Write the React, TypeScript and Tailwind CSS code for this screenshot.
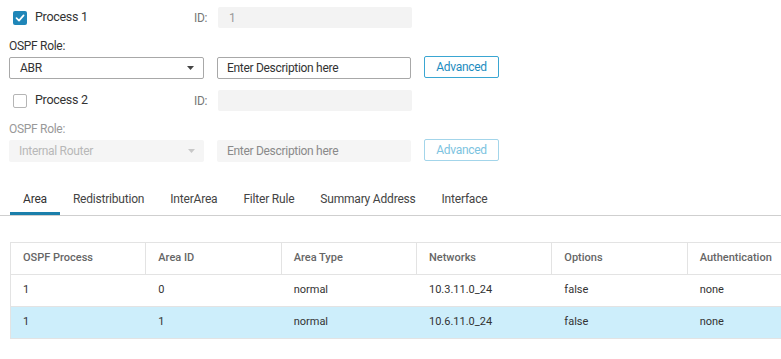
import React from "react";

const Check = ({ checked }: { checked: boolean }) =>
  checked ? (
    <span className="w-[14px] h-[14px] rounded-[2px] bg-[#1f86b8] flex items-center justify-center">
      <svg width="10" height="10" viewBox="0 0 10 10">
        <path d="M1.5 5.2 L4 7.6 L8.6 2.4" stroke="white" strokeWidth="1.7" fill="none" strokeLinecap="round" strokeLinejoin="round" />
      </svg>
    </span>
  ) : (
    <span className="w-[14px] h-[14px] rounded-[2px] border border-[#b5b5b5] bg-white" />
  );

const Caret = ({ light }: { light?: boolean }) => (
  <svg width="7" height="4" viewBox="0 0 7 4">
    <path d="M0 0 H7 L3.5 4 Z" fill={light ? "#c8c8c8" : "#444"} />
  </svg>
);

const ProcessBlock = ({ n, checked, id, role }: { n: number; checked: boolean; id: string; role: string }) => (
  <div>
    <div className="h-[35px] flex items-center">
      <div className="w-[194px] pl-[13px] flex items-center gap-[8px]">
        <Check checked={checked} />
        <span className="text-[#333] text-[12.5px]">Process {n}</span>
      </div>
      <span className="w-[24px] text-[#777]">ID:</span>
      <div className="w-[194px] h-[21px] bg-[#f3f3f3] rounded-[2px] flex items-center px-[11px] text-[#999]">{id}</div>
    </div>
    <div className={`h-[22px] pl-[9px] flex items-center ${checked ? "text-[#333]" : "text-[#999]"}`}>OSPF Role:</div>
    <div className="h-[22px] pl-[9px] flex items-center gap-[13px]">
      {checked ? (
        <div className="w-[195px] h-[22px] border border-[#a8a8a8] rounded-[2px] flex items-center justify-between pl-[10px] pr-[9px] text-[#333]">
          <span>{role}</span>
          <Caret />
        </div>
      ) : (
        <div className="w-[195px] h-[22px] bg-[#f5f5f5] rounded-[2px] flex items-center justify-between pl-[10px] pr-[9px] text-[#b8b8b8]">
          <span>{role}</span>
          <Caret light />
        </div>
      )}
      {checked ? (
        <div className="w-[194px] h-[22px] border border-[#a8a8a8] rounded-[2px] flex items-center px-[9px] text-[#333]">
          Enter Description here
        </div>
      ) : (
        <div className="w-[194px] h-[22px] bg-[#f5f5f5] rounded-[2px] flex items-center px-[10px] text-[#8a8a8a]">
          Enter Description here
        </div>
      )}
      {checked ? (
        <div className="w-[75px] h-[22px] -mt-[2px] border border-[#3aa6d2] rounded-[2px] flex items-center justify-center text-[#1d8cc0]">
          Advanced
        </div>
      ) : (
        <div className="w-[75px] h-[22px] -mt-[2px] border border-[#a3d5ea] rounded-[2px] flex items-center justify-center text-[#7cc3e0]">
          Advanced
        </div>
      )}
    </div>
  </div>
);

const tabs = ["Area", "Redistribution", "InterArea", "Filter Rule", "Summary Address", "Interface"];
const cols = ["OSPF Process", "Area ID", "Area Type", "Networks", "Options", "Authentication"];
const rows = [
  ["1", "0", "normal", "10.3.11.0_24", "false", "none"],
  ["1", "1", "normal", "10.6.11.0_24", "false", "none"],
];

export default function App() {
  return (
    <div className="w-[781px] h-[359px] bg-white overflow-hidden text-[12px] tracking-[-0.3px] font-['Roboto',sans-serif]">
      <ProcessBlock n={1} checked id="1" role="ABR" />
      <div className="mt-[4px]">
        <ProcessBlock n={2} checked={false} id="" role="Internal Router" />
      </div>

      <div className="mt-[24px] h-[30px] border-b border-[#cfcfcf] flex pl-[10px] text-[12px] tracking-[-0.2px]">
        {tabs.map((t, i) => (
          <div
            key={t}
            className={`px-[13px] h-full flex items-center border-b-[3px] ${
              i === 0 ? "border-[#1b7fab] text-[#333]" : "border-transparent text-[#444]"
            }`}
          >
            {t}
          </div>
        ))}
      </div>

      <div className="mt-[26px] ml-[10px] w-[813px] border-t border-l border-[#e3e3e3] text-[11px] tracking-normal">
        <div className="grid grid-cols-6 h-[32px] border-b border-[#e3e3e3] font-medium text-[#666]">
          {cols.map((c) => (
            <div key={c} className="flex items-center px-[12px] border-r border-[#e3e3e3]">
              {c}
            </div>
          ))}
        </div>
        {rows.map((r, i) => (
          <div
            key={i}
            className={`grid grid-cols-6 h-[32px] border-b border-[#e3e3e3] text-[#333] ${i === 1 ? "bg-[#cdeefb]" : ""}`}
          >
            {r.map((v, j) => (
              <div key={j} className="flex items-center px-[12px]">
                {v}
              </div>
            ))}
          </div>
        ))}
      </div>
    </div>
  );
}
